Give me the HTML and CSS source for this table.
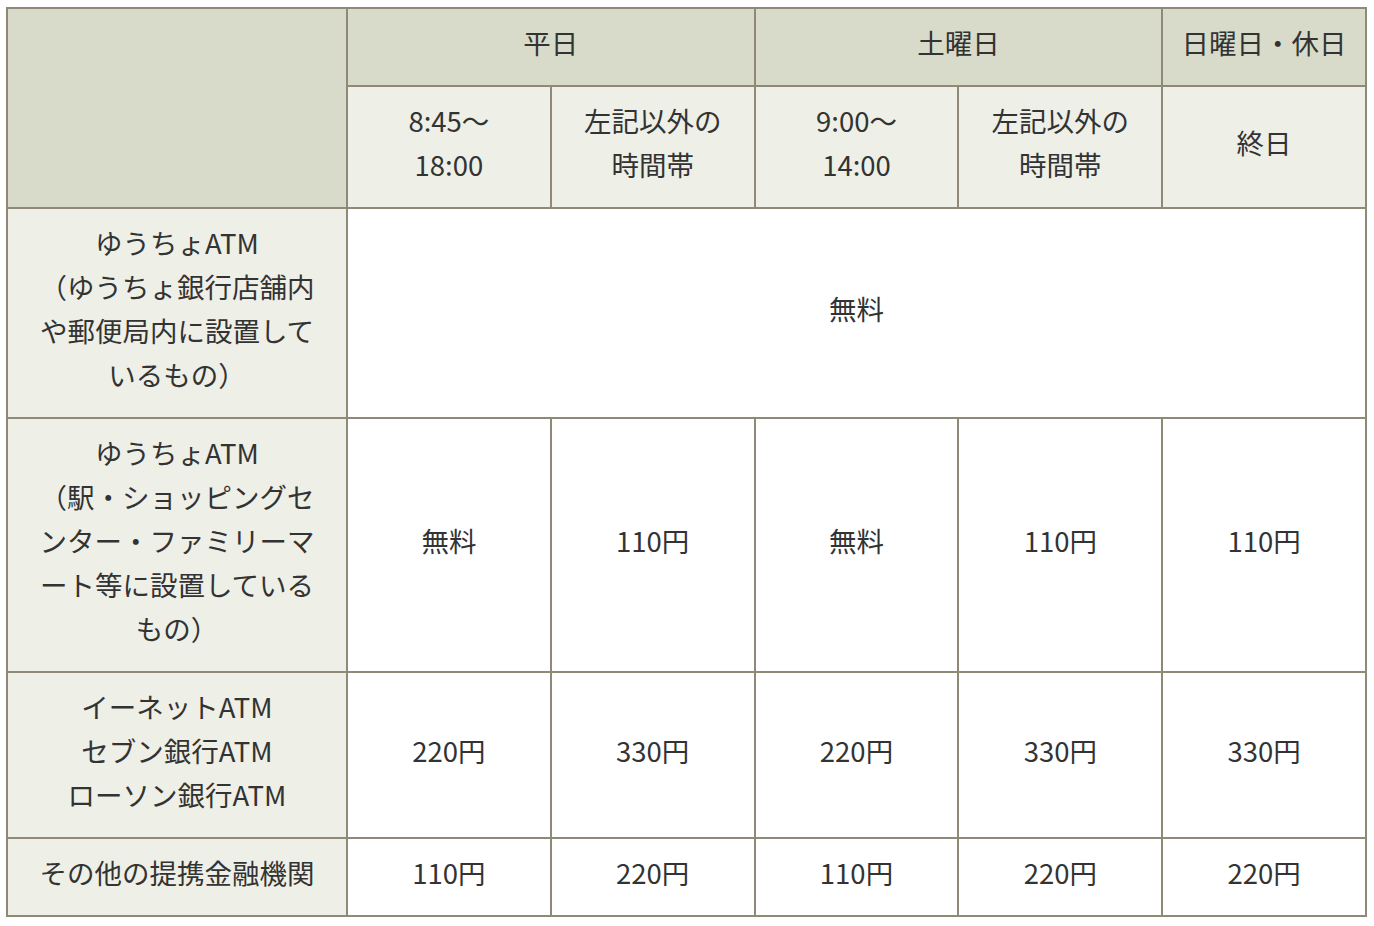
FILE: index.html
```html
<!DOCTYPE html>
<html lang="ja">
<head>
<meta charset="utf-8">
<title>ATM手数料</title>
<link rel="stylesheet" href="styles.css">
</head>
<body>
<table class="fee-table">
  <colgroup>
    <col class="col-label">
    <col class="col-val">
    <col class="col-val">
    <col class="col-val">
    <col class="col-val">
    <col class="col-val">
  </colgroup>
  <thead>
    <tr>
      <th class="head-main" rowspan="2"></th>
      <th class="head-main" colspan="2">平日</th>
      <th class="head-main" colspan="2">土曜日</th>
      <th class="head-main">日曜日・休日</th>
    </tr>
    <tr>
      <th class="head-sub">8:45～<br>18:00</th>
      <th class="head-sub">左記以外の<br>時間帯</th>
      <th class="head-sub">9:00～<br>14:00</th>
      <th class="head-sub">左記以外の<br>時間帯</th>
      <th class="head-sub">終日</th>
    </tr>
  </thead>
  <tbody>
    <tr>
      <th class="row-label">ゆうちょATM<br>（ゆうちょ銀行店舗内や郵便局内に設置しているもの）</th>
      <td colspan="5">無料</td>
    </tr>
    <tr>
      <th class="row-label">ゆうちょATM<br>（駅・ショッピングセンター・ファミリーマート等に設置しているもの）</th>
      <td>無料</td>
      <td>110円</td>
      <td>無料</td>
      <td>110円</td>
      <td>110円</td>
    </tr>
    <tr>
      <th class="row-label">イーネットATM<br>セブン銀行ATM<br>ローソン銀行ATM</th>
      <td>220円</td>
      <td>330円</td>
      <td>220円</td>
      <td>330円</td>
      <td>330円</td>
    </tr>
    <tr>
      <th class="row-label">その他の提携金融機関</th>
      <td>110円</td>
      <td>220円</td>
      <td>110円</td>
      <td>220円</td>
      <td>220円</td>
    </tr>
  </tbody>
</table>
</body>
</html>
```
FILE: styles.css
```css
html, body {
  background: #ffffff;
}
body {
  margin: 7px 0 0 6px;
  font-family: "Noto Sans CJK JP", "Noto Sans", sans-serif;
  color: #333333;
}
.fee-table {
  width: 1359px;
  table-layout: fixed;
  border-collapse: collapse;
  border: 2px solid #8e8a77;
  font-size: 27.5px;
  line-height: 44px;
}
.col-label { width: 340px; }
.col-val { width: 203.8px; }
.fee-table th,
.fee-table td {
  border: 2px solid #8e8a77;
  padding: 11px 8px 21px;
  text-align: center;
  vertical-align: middle;
  font-weight: normal;
}
.head-main {
  background: #d8dbc9;
}
.head-sub,
.row-label {
  background: #eeefe7;
}
.fee-table .row-label {
  padding-left: 22px;
  padding-right: 22px;
}
.fee-table td {
  background: #ffffff;
}
```
